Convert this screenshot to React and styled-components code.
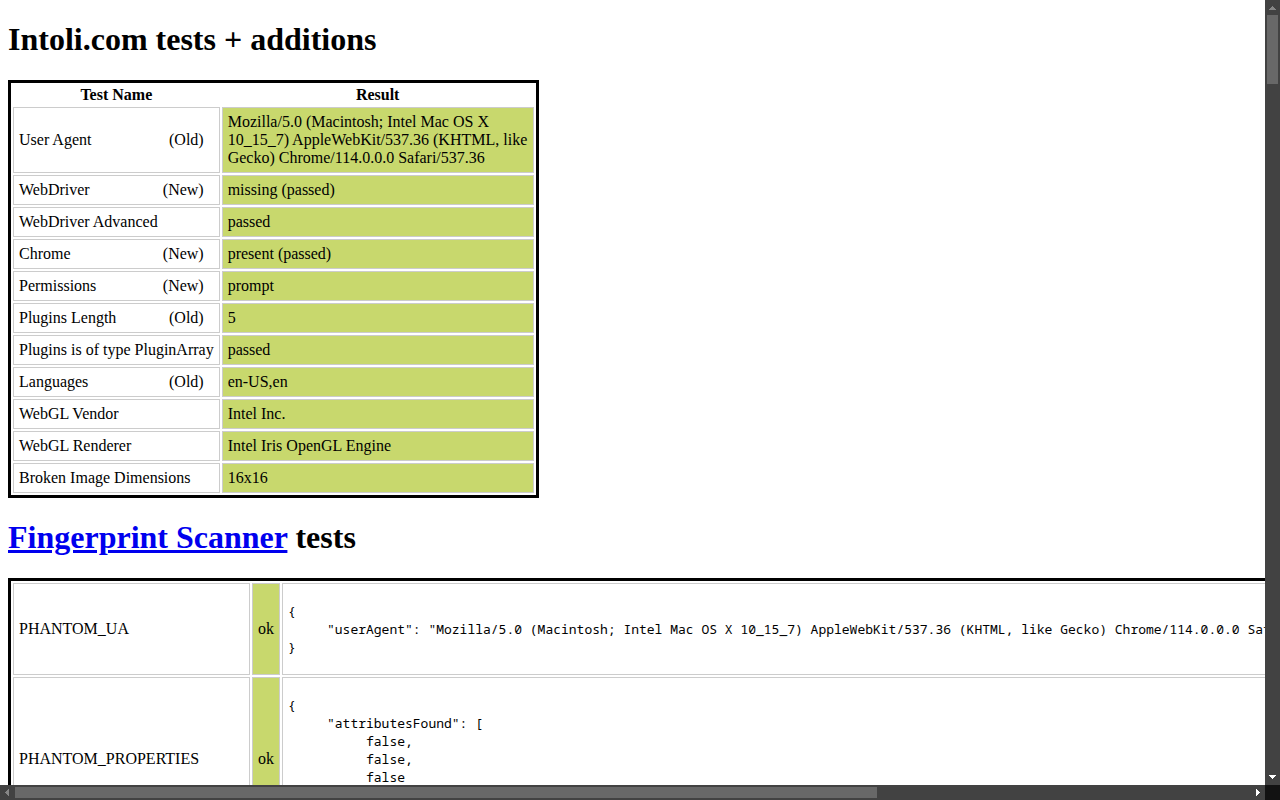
import React from "react";
import styled, { createGlobalStyle } from "styled-components";

const GlobalStyle = createGlobalStyle`
  body {
    margin: 0;
    background: #fff;
    color: #000;
    font: 16px/18px "Liberation Serif", "Times New Roman", serif;
  }
`;

const Shell = styled.div`
  display: grid;
  grid-template: minmax(0, 1fr) 15px / minmax(0, 1fr) 15px;
  height: 100vh;
`;

const Page = styled.main`
  overflow: auto;
  scrollbar-width: none;
  padding: 0 8px;
`;

const Heading = styled.h1`
  margin: 21px 0 23px;
  font-size: 32px;
  line-height: 36px;
  font-weight: bold;
`;

const Link = styled.a`
  color: #0000ee;
  text-decoration: underline;
`;

const Table = styled.table`
  border: 3px solid #000;
  border-collapse: separate;
  border-spacing: 2px;
`;

const HeadCell = styled.th`
  padding: 1px;
  font-weight: bold;
  text-align: center;
`;

const Cell = styled.td`
  box-sizing: border-box;
  padding: 5px;
  border: 1px solid #ccc;
  background: ${(p) => (p.$passed ? "#c8d86d" : "transparent")};
  min-width: ${(p) => p.$min || 0}px;
  max-width: ${(p) => (p.$max ? `${p.$max}px` : "none")};
`;

const Age = styled.span`
  float: right;
  margin-right: 10px;
`;

const Dump = styled.pre`
  margin: 13px 0;
  font: 13px/18px "Noto Sans Mono", monospace;
`;

const Bar = styled.div`
  display: flex;
  flex-direction: ${(p) => (p.$vertical ? "column" : "row")};
  background: #424242;
`;

const ArrowButton = styled.button`
  flex: none;
  width: 15px;
  height: 15px;
  padding: 0;
  border: 0;
  background: none;
  color: ${(p) => (p.disabled ? "#868686" : "#fff")};

  svg {
    display: block;
  }
`;

const Track = styled.div`
  flex: 1;
  display: flex;
  flex-direction: inherit;
  padding: ${(p) => (p.$vertical ? "0 2px" : "2px 0")};
`;

const Thumb = styled.div`
  flex: ${(p) => p.$share} 1 0;
  background: #686868;
`;

const Rest = styled.div`
  flex: ${(p) => p.$share} 1 0;
`;

const Corner = styled.div`
  background: #121212;
`;

const ARROWS = {
  up: "M7 6h1v1h1v1h1v1h1v1H4V9h1V8h1V7h1z",
  down: "M4 5h7v1h-1v1H9v1H8v1H7V8H6V7H5V6H4z",
  left: "M5 7h1V6h1V5h1V4h1v7H8v-1H7V9H6V8H5z",
  right: "M6 4h1v1h1v1h1v1h1v1H9v1H8v1H7v1H6z",
};

function Arrow({ direction, disabled }) {
  return (
    <ArrowButton type="button" aria-label={`Scroll ${direction}`} disabled={disabled}>
      <svg width="15" height="15" viewBox="0 0 15 15" fill="currentColor" shapeRendering="crispEdges">
        <path d={ARROWS[direction]} />
      </svg>
    </ArrowButton>
  );
}

function ScrollBar({ vertical, thumb, rest }) {
  return (
    <Bar $vertical={vertical}>
      <Arrow direction={vertical ? "up" : "left"} disabled />
      <Track $vertical={vertical}>
        <Thumb $share={thumb} />
        <Rest $share={rest} />
      </Track>
      <Arrow direction={vertical ? "down" : "right"} />
    </Bar>
  );
}

const USER_AGENT =
  "Mozilla/5.0 (Macintosh; Intel Mac OS X 10_15_7) AppleWebKit/537.36 (KHTML, like Gecko) Chrome/114.0.0.0 Safari/537.36";

const TESTS = [
  ["User Agent", "(Old)", USER_AGENT],
  ["WebDriver", "(New)", "missing (passed)"],
  ["WebDriver Advanced", "", "passed"],
  ["Chrome", "(New)", "present (passed)"],
  ["Permissions", "(New)", "prompt"],
  ["Plugins Length", "(Old)", "5"],
  ["Plugins is of type PluginArray", "", "passed"],
  ["Languages", "(Old)", "en-US,en"],
  ["WebGL Vendor", "", "Intel Inc."],
  ["WebGL Renderer", "", "Intel Iris OpenGL Engine"],
  ["Broken Image Dimensions", "", "16x16"],
];

const SCANS = [
  ["PHANTOM_UA", { userAgent: USER_AGENT }],
  ["PHANTOM_PROPERTIES", { attributesFound: [false, false, false] }],
];

export default function App() {
  return (
    <Shell>
      <GlobalStyle />
      <Page>
        <Heading>Intoli.com tests + additions</Heading>
        <Table>
          <thead>
            <tr>
              <HeadCell scope="col">Test Name</HeadCell>
              <HeadCell scope="col">Result</HeadCell>
            </tr>
          </thead>
          <tbody>
            {TESTS.map(([name, age, result]) => (
              <tr key={name}>
                <Cell>
                  {name}
                  {age && <Age>{age}</Age>}
                </Cell>
                <Cell $passed $min={312} $max={312}>
                  {result}
                </Cell>
              </tr>
            ))}
          </tbody>
        </Table>
        <Heading>
          <Link href="https://github.com/antoinevastel/fpscanner">Fingerprint Scanner</Link> tests
        </Heading>
        <Table>
          <tbody>
            {SCANS.map(([name, data]) => (
              <tr key={name}>
                <Cell $min={237}>{name}</Cell>
                <Cell $passed>ok</Cell>
                <Cell $min={1518}>
                  <Dump>{JSON.stringify(data, null, 5)}</Dump>
                </Cell>
              </tr>
            ))}
          </tbody>
        </Table>
      </Page>
      <ScrollBar vertical thumb={69} rest={686} />
      <ScrollBar thumb={862} rest={373} />
      <Corner />
    </Shell>
  );
}
